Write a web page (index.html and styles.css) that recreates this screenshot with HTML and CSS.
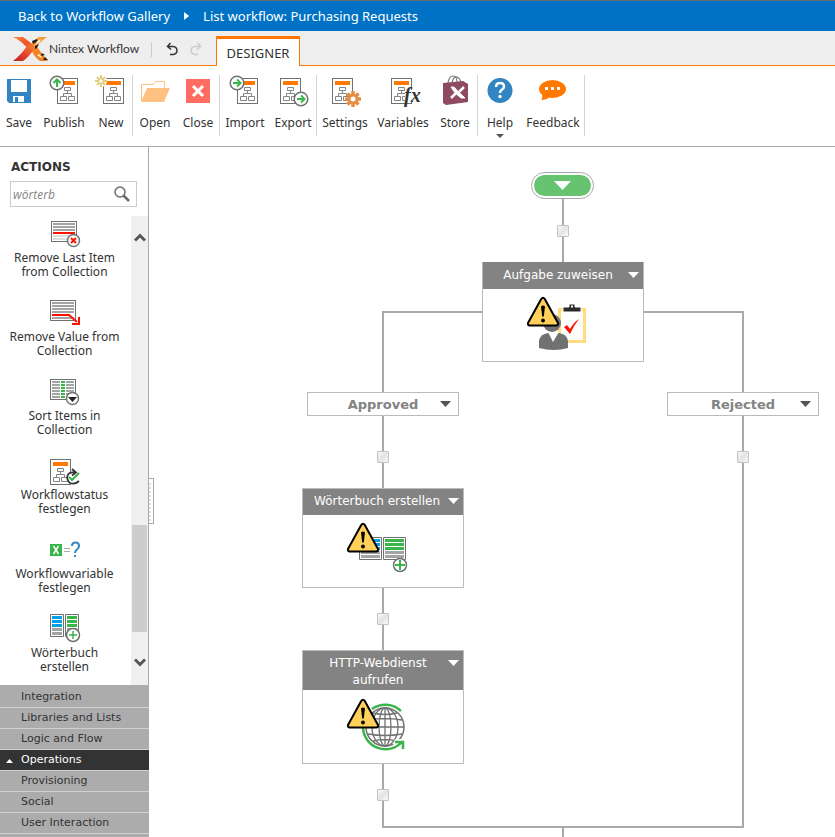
FILE: index.html
```html
<!DOCTYPE html>
<html lang="en">
<head>
<meta charset="utf-8">
<title>List workflow: Purchasing Requests</title>
<link rel="stylesheet" href="styles.css">
</head>
<body>
<svg class="defs" aria-hidden="true">
  <defs>
    <linearGradient id="logo-fill" x1="0" y1="0" x2="1" y2="1">
      <stop offset="0" stop-color="#f58a3a"/><stop offset=".5" stop-color="#ef5326"/><stop offset="1" stop-color="#f8952c"/>
    </linearGradient>
    <linearGradient id="logo-red" x1="0" y1="1" x2="1" y2="0">
      <stop offset="0" stop-color="#b3201f"/><stop offset=".5" stop-color="#e8432a"/><stop offset="1" stop-color="#f47b2c"/>
    </linearGradient>
    <g id="doc">
      <rect x="0.5" y="0.5" width="20" height="25" fill="#fff" stroke="#6f7271"/>
      <rect x="3" y="3" width="15" height="4" fill="#ff7900"/>
      <path d="M7.500 9.500h6v3h-6zM3.500 18.500h6v4h-6zM11.500 18.500h6v4h-6zM10.500 12.500v3M6.500 18.500v-3h8v3" fill="none" stroke="#858786"/>
    </g>
    <g id="warning">
      <path d="M18.200 6q1.800-2.500 3.600 0L35 30q.5 2-1.500 2.500H6.500Q4.500 32 5 30z" fill="#ffd05a" stroke="#000" stroke-width="2" stroke-linejoin="round"/>
      <path d="M18 13.500q2-2 4 0l-1.200 10h-1.600z"/><circle cx="20" cy="27.500" r="1.900"/>
    </g>
    <g id="plus">
      <circle r="6.500" fill="#fff" stroke="#6f7271" stroke-width="1.500"/>
      <path d="M-4 0h8M0-4v8" stroke="#39b54a" stroke-width="1.500"/>
    </g>
    <g id="arrow">
      <circle r="6.800" fill="#fff" stroke="#6f7271" stroke-width="1.500"/>
      <path d="M-4 0h7M0-3.500l3.500 3.500L0 3.500" fill="none" stroke="#39b54a" stroke-width="2"/>
    </g>
  </defs>
</svg>

<header class="crumbs">
  <a href="#">Back to Workflow Gallery</a>
  <span class="crumb-arrow"></span>
  <a href="#">List workflow: Purchasing Requests</a>
</header>

<div class="appbar">
  <svg class="logo" viewBox="0 0 36 26" aria-hidden="true">
    <path d="M34 1h-8q-4 2-8 7l3 6q4-6 9-10z" fill="#f79a3a"/>
    <path d="M18 13l5-3 12 15h-8q-6-4-9-12z" fill="#f58220"/>
    <path d="M0 1h10q6 4 13 11l-5 4Q8 4 0 1z" fill="url(#logo-fill)"/>
    <path d="M0 25Q8 19 14 10l7 3q-5 8-11 12z" fill="url(#logo-red)"/>
    <path d="M19 5l5-2 1 2-5 3zM22 10l4-2-2 4-2 1zM28 20l4-1-3-2zM30 24h5l-3-3z" fill="#231f20"/>
    <path d="M24 5l4-2-1 3-4 3zM26 18l3 3-1 1-4-3z" fill="#fff0c8"/>
  </svg>
  <span class="brand">Nintex Workflow</span>
  <span class="bar-sep"></span>
  <button class="undo" aria-label="Undo"><svg viewBox="0 0 12 14"><path d="M4.500 1L1.500 4.500l3.500 3M2 4.500h5q4 .5 4 4t-4 4H4" fill="none" stroke="#333" stroke-width="1.500"/></svg></button>
  <button class="undo" aria-label="Redo"><svg viewBox="0 0 12 14"><path d="M7.500 1l3 3.500-3.500 3M10 4.500H5q-4 .5-4 4t4 4h3" fill="none" stroke="#ccc" stroke-width="1.500"/></svg></button>
  <button class="tab">DESIGNER</button>
</div>

<div class="ribbon">
  <div class="group g-file">
    <button class="tool"><svg viewBox="0 0 32 32"><path d="M4 4h24v24H6l-2-2z" fill="#3284c2"/><path d="M8 5h16v12H8zM10 21h11v6H10z" fill="#fff"/><path d="M12 22h3v5h-3z" fill="#3284c2"/></svg>Save</button>
    <button class="tool"><svg viewBox="0 0 32 32"><use href="#doc" x="9" y="3"/><use href="#arrow" transform="translate(9 8) rotate(-90)"/></svg>Publish</button>
    <button class="tool"><svg viewBox="0 0 32 32"><use href="#doc" x="8" y="3"/><circle cx="6" cy="6" r="6" fill="#fff"/><path d="M6 0v3M6 9v3M0 6h3M9 6h3M2 2l2 2M8 8l2 2M10 2L8 4M4 8l-2 2" stroke="#e3cc7b" stroke-width="2"/><circle cx="6" cy="6" r="2.500" fill="#fff" stroke="#e3cc7b" stroke-width="1.500"/></svg>New</button>
  </div>
  <div class="group g-open">
    <button class="tool"><svg viewBox="0 0 32 32"><path d="M2.500 26V9.500h12l2-3h9v7" fill="none" stroke="#ffc182"/><path d="M8 13h23l-6 14H2z" fill="#ffc182"/></svg>Open</button>
    <button class="tool"><svg viewBox="0 0 32 32"><path d="M4 4h24v24H4z" fill="#ff6c61"/><path d="M11 11l10 10M21 11L11 21" stroke="#fff" stroke-width="3"/></svg>Close</button>
  </div>
  <div class="group g-port">
    <button class="tool"><svg viewBox="0 0 32 32"><use href="#doc" x="8" y="3"/><use href="#arrow" x="8" y="8"/></svg>Import</button>
    <button class="tool"><svg viewBox="0 0 32 32"><use href="#doc" x="3" y="3"/><use href="#arrow" x="24" y="24"/></svg>Export</button>
  </div>
  <div class="group g-config">
    <button class="tool"><svg viewBox="0 0 32 32"><use href="#doc" x="3" y="3"/><circle cx="24" cy="24" r="5.500" fill="#e58e43"/><path d="M24 16v16M16 24h16M18.500 18.500l11 11M29.500 18.500l-11 11" stroke="#e58e43" stroke-width="3.500"/><circle cx="24" cy="24" r="2.500" fill="#fff"/></svg>Settings</button>
    <button class="tool"><svg viewBox="0 0 32 32"><use href="#doc" x="4" y="3"/><path d="M18 15h8v12h-8z" fill="#fff"/><text x="17" y="27" class="fx">fx</text></svg>Variables</button>
    <button class="tool"><svg viewBox="0 0 32 32"><path d="M9 8q1-7 5-7t4 6M13 7q2-6 5-5t4 6" fill="none" stroke="#777" stroke-width="1.200"/><path d="M4 8l20-2 5 3v18l-22 3-3-2z" fill="#8d4a61"/><path d="M12 12h3q4 5 11 11h-4q-7-5-10-11z" fill="#fff" stroke="#fff"/><path d="M25 12l-5 5M12 23l5-5" fill="none" stroke="#fff" stroke-width="2.500"/></svg>Store</button>
  </div>
  <div class="group g-help">
    <button class="tool tool-menu"><svg viewBox="0 0 32 32"><circle cx="16" cy="15.500" r="12.500" fill="#3284c2"/><path d="M12 12q0-4 4-4t4 3.500q0 2-2.500 3.500-1.500 1-1.500 3" fill="none" stroke="#fff" stroke-width="2.500"/><circle cx="16" cy="21.500" r="1.700" fill="#fff"/></svg>Help</button>
    <button class="tool"><svg viewBox="0 0 32 32"><ellipse cx="15.500" cy="14" rx="13.500" ry="9" fill="#ff7900"/><path d="M5 19q1 4-1 6 6 0 10-4z" fill="#ff7900"/><path d="M8 12h3v3H8zM14 12h3v3h-3zM20 12h3v3h-3z" fill="#fff"/></svg>Feedback</button>
  </div>
</div>

<main class="workspace">
  <aside class="sidebar">
    <label class="side-title" for="search">ACTIONS</label>
    <div class="search">
      <input id="search" type="text" value="wörterb">
      <svg viewBox="0 0 16 16" aria-hidden="true"><circle cx="6" cy="6" r="5" fill="none" stroke="#6b6b6b" stroke-width="1.500"/><path d="M9.500 9.500L15 15" stroke="#6b6b6b" stroke-width="2.500"/></svg>
    </div>
    <div class="list">
      <div class="actions">
        <button class="action"><svg viewBox="0 0 32 32"><rect x="2.500" y="3.500" width="25" height="20" fill="#fff" stroke="#6f7271"/><path d="M4 6h22M4 9h22M4 12h22" stroke="#a3a5a4" stroke-width="2"/><path d="M4 15h22" stroke="#f10" stroke-width="2"/><path d="M4 18h22M4 21h22" stroke="#ddd" stroke-width="2"/><circle cx="24.500" cy="22.500" r="6" fill="#fff" stroke="#6f7271" stroke-width="1.500"/><path d="M22 20l5 5M27 20l-5 5" stroke="#f10" stroke-width="2"/></svg>Remove Last Item from Collection</button>
        <button class="action"><svg viewBox="0 0 32 32"><rect x="1.500" y="3.500" width="25" height="20" fill="#fff" stroke="#6f7271"/><path d="M3 6h22M3 9h22M3 12h22M3 15h22M3 21h22" stroke="#a3a5a4" stroke-width="2"/><path d="M3 18h17l8 7M30 20v7h-7" fill="none" stroke="#f10" stroke-width="2"/></svg>Remove Value from Collection</button>
        <button class="action"><svg viewBox="0 0 32 32"><rect x="1.500" y="3.500" width="25" height="20" fill="#fff" stroke="#6f7271"/><path d="M3 6h8M17 6h8M3 9h8M17 9h8M3 12h8M17 12h8M3 15h8M17 15h8M3 18h8M17 18h8M3 21h8M17 21h8" stroke="#a3a5a4" stroke-width="2"/><path d="M12 6h4M12 9h4M12 12h4M12 15h4M12 18h4M12 21h4" stroke="#39b54a" stroke-width="2"/><circle cx="23.500" cy="22.500" r="6" fill="#fff" stroke="#6f7271" stroke-width="1.500"/><path d="M19 21h9l-4.500 5z" fill="#222"/></svg>Sort Items in Collection</button>
        <button class="action"><svg viewBox="0 0 32 32"><use href="#doc" x="1" y="4"/><circle cx="24" cy="23" r="6" fill="#fff"/><path d="M26 17.500q-6-1-7.500 3-1 5 2.500 7.500 5 2 9-2M23 14l4 3.500-4 3" fill="none" stroke="#333" stroke-width="1.800"/><path d="M20 22l3 3 7-7" fill="none" stroke="#39b54a" stroke-width="2"/></svg>Workflowstatus festlegen</button>
        <button class="action"><svg viewBox="0 0 32 32"><path d="M1 10h12v12H1z" fill="#39b54a"/><path d="M4.500 12l5 8M9.500 12l-5 8" stroke="#fff" stroke-width="1.500"/><path d="M15 14.500h6M15 17.500h6" stroke="#aaa"/><path d="M23 12q0-3.500 3.500-3.500T30 12q0 2-2 3.500T26 19" fill="none" stroke="#3284c2" stroke-width="2"/><path d="M25 21h2v2h-2z" fill="#3284c2"/></svg>Workflowvariable festlegen</button>
        <button class="action"><svg viewBox="0 0 32 32"><path d="M1.500 1.500h13v22h-13zM16.500 1.500h13v22h-13z" fill="#fff" stroke="#6f7271"/><path d="M3 4.500h10M3 8.500h10M3 12.500h10" stroke="#00a0e6" stroke-width="3"/><path d="M18 4.500h10M18 8.500h10M18 12.500h10" stroke="#39b54a" stroke-width="3"/><path d="M3 16.500h10M3 20.500h10M18 16.500h10M18 20.500h10" stroke="#a3a5a4" stroke-width="3"/><use href="#plus" x="24" y="22"/></svg>Wörterbuch erstellen</button>
      </div>
      <div class="scroll" aria-hidden="true">
        <svg class="scroll-up" viewBox="0 0 12 9"><path d="M1 7.500l5-5 5 5" fill="none" stroke="#555" stroke-width="3"/></svg>
        <span class="thumb"></span>
        <svg class="scroll-down" viewBox="0 0 12 9"><path d="M1 1.500l5 5 5-5" fill="none" stroke="#555" stroke-width="3"/></svg>
      </div>
    </div>
    <nav class="categories">
      <a href="#">Integration</a>
      <a href="#">Libraries and Lists</a>
      <a href="#">Logic and Flow</a>
      <a href="#" class="current">Operations</a>
      <a href="#">Provisioning</a>
      <a href="#">Social</a>
      <a href="#">User Interaction</a>
    </nav>
    <span class="grip"></span>
  </aside>

  <section class="canvas">
    <svg class="wires" viewBox="149 147 686 690" aria-hidden="true">
      <path d="M563 198v64M482 312H383v515h360V312H643M563 827v10" fill="none" stroke="#a9a9a9" stroke-width="2"/>
    </svg>
    <button class="start" aria-label="Start"></button>
    <button class="joint j1" aria-label="Insert action"></button>
    <button class="joint j2" aria-label="Insert action"></button>
    <button class="joint j3" aria-label="Insert action"></button>
    <button class="joint j4" aria-label="Insert action"></button>
    <button class="joint j5" aria-label="Insert action"></button>

    <article class="node n-task">
      <button class="node-head">Aufgabe zuweisen</button>
      <svg class="node-icon" viewBox="0 0 80 60">
        <path d="M36.500 16.500h25v32h-25z" fill="#fff" stroke="#ffdc7d" stroke-width="3"/>
        <path d="M40 19v-5h6v-3h6v3h6v5z" fill="#2b2b2b" stroke="#fff"/><path d="M48 12.500h2v2h-2z" fill="#fff"/>
        <path d="M41 34l3-2 3 4q4-7 9-10-5 6-9 15z" fill="#f10"/>
        <circle cx="29" cy="30" r="9" fill="#6f7271"/>
        <path d="M16 55V48q1-7 9-8h11q8 1 9 8v7q-14 4-29 0z" fill="#6f7271"/><path d="M25 39h11l-6 10z" fill="#fff"/>
        <use href="#warning"/>
      </svg>
    </article>
    <button class="branch b-yes">Approved</button>
    <button class="branch b-no">Rejected</button>
    <article class="node n-dict">
      <button class="node-head">Wörterbuch erstellen</button>
      <svg class="node-icon" viewBox="0 0 80 60">
        <path d="M16.500 18.500h22v22h-22zM40.500 18.500h22v22h-22z" fill="#fff" stroke="#6f7271"/>
        <path d="M18 21.500h19M18 25.500h19M18 29.500h19" stroke="#00a0e6" stroke-width="3"/>
        <path d="M42 21.500h19M42 25.500h19M42 29.500h19" stroke="#39b54a" stroke-width="3"/>
        <path d="M18 33.500h19M18 37.500h19M42 33.500h19M42 37.500h19" stroke="#a3a5a4" stroke-width="3"/>
        <use href="#plus" x="57" y="46"/><path d="M52 46h10M57 41v10" stroke="#39b54a" stroke-width="2"/>
        <use href="#warning"/>
      </svg>
    </article>
    <article class="node n-http">
      <button class="node-head">HTTP-Webdienst aufrufen</button>
      <svg class="node-icon" viewBox="0 0 80 60">
        <g fill="none" stroke="#6f7271" stroke-width="1.300">
          <circle cx="42" cy="32" r="19" stroke-width="1.500"/>
          <ellipse cx="42" cy="32" rx="6" ry="19"/>
          <ellipse cx="42" cy="32" rx="13" ry="19"/>
          <path d="M42 13v38M23 32h38M25 25q17-3 34 0M25 39q17 3 34 0M30 18q12 3 24 0M30 46q12-3 24 0"/>
        </g>
        <path d="M50 49l2-5h9v7l-8 3z" fill="#fff"/>
        <path d="M29 14A22.500 22.500 0 0 1 58 16M20 33A22.500 22.500 0 0 0 59 47M52 47h8v7" fill="none" stroke="#39b54a" stroke-width="2.500"/>
        <use href="#warning"/>
      </svg>
    </article>
  </section>
</main>
</body>
</html>
```
FILE: styles.css
```css
* { box-sizing: border-box; }
body {
  margin: 0;
  height: 100vh;
  display: flex;
  flex-direction: column;
  overflow: hidden;
  background: #fff;
  color: #333;
  font: 12px/14px "Noto Sans", sans-serif;
}
button {
  margin: 0;
  padding: 0;
  border: 0;
  background: none;
  color: inherit;
  font: inherit;
}
a { color: inherit; text-decoration: none; }
svg { display: block; flex: none; }
.defs { position: absolute; width: 0; height: 0; }

.crumbs {
  display: flex;
  flex: none;
  align-items: center;
  gap: 14px;
  height: 31px;
  padding-left: 18px;
  border-top: 1px solid #6b6b6b;
  background: #0072c6;
  color: #fff;
  font-size: 13px;
}
.crumb-arrow {
  width: 5px;
  height: 8px;
  background: #fff;
  clip-path: polygon(0 0, 100% 50%, 0 100%);
}

.appbar {
  display: flex;
  flex: none;
  align-items: center;
  height: 35px;
  padding: 2px 0 0 13px;
  border-bottom: 1px solid #ff7900;
  background: #eee;
}
.logo { width: 36px; height: 26px; }
.brand { width: 102px; font: 12px/16px Lato, sans-serif; }
.bar-sep { width: 1px; height: 15px; margin-right: 14px; background: #ccc; }
.undo { width: 24px; }
.undo svg { width: 12px; height: 14px; }
.tab {
  align-self: flex-end;
  width: 84px;
  height: 30px;
  margin: 0 0 -1px 2px;
  border: solid #ff7900;
  border-width: 3px 1px 0;
  background: #fff;
  font-size: 13px;
}

.ribbon {
  display: flex;
  flex: none;
  height: 81px;
  padding-top: 9px;
  border-bottom: 1px solid #aaa;
}
.group {
  display: grid;
  height: 61px;
  border-right: 1px solid #d4d4d4;
}
.g-file { grid-template-columns: 38px 52px 42px; }
.g-open { grid-template-columns: 44px 42px; }
.g-port { grid-template-columns: 50px 46px; }
.g-config { grid-template-columns: 56px 60px 44px; }
.g-help { grid-template-columns: 44px 62px; }
.tool {
  display: flex;
  flex-direction: column;
  align-items: center;
  gap: 9px;
  white-space: nowrap;
}
.tool svg { width: 32px; height: 32px; overflow: visible; }
.tool-menu::after {
  content: "";
  width: 8px;
  height: 4px;
  margin-top: -5px;
  background: #555;
  clip-path: polygon(0 0, 100% 0, 50% 100%);
}
.fx { font: italic bold 20px "Liberation Serif", serif; fill: #333; }

.workspace { display: flex; flex: 1; min-height: 0; }
.sidebar {
  position: relative;
  display: flex;
  flex-direction: column;
  width: 149px;
  border-right: 1px solid #a9a9a9;
}
.side-title { padding: 13px 11px 7px; font: bold 12px/14px "DejaVu Sans", sans-serif; }
.search {
  display: flex;
  align-items: center;
  width: 127px;
  height: 26px;
  margin: 0 0 9px 10px;
  padding-right: 6px;
  border: 1px solid #ccc;
}
.search input {
  flex: 1;
  min-width: 0;
  padding: 0 2px;
  border: 0;
  background: none;
  color: #8a8a8a;
  font: italic 12px "Noto Sans", sans-serif;
}
.search svg { width: 16px; height: 16px; }
.list { display: flex; flex: 1; min-height: 0; overflow: hidden; }
.actions { flex: 1; padding-top: 2px; }
.action {
  display: flex;
  flex-direction: column;
  align-items: center;
  gap: 1px;
  width: 100%;
  height: 79px;
  padding: 0 9px 0 7px;
}
.action svg { width: 32px; height: 32px; }
.scroll {
  display: flex;
  flex-direction: column;
  align-items: center;
  width: 17px;
  padding: 17px 0 18px;
  background: #f0f0f0;
}
.scroll svg { width: 12px; height: 9px; }
.thumb { width: 15px; height: 107px; margin: auto 0 26px; background: #cdcdcd; }
.categories {
  margin-right: -1px;
  padding: 2px 0 3px;
  background: #acacac;
  font: 11px/19px "DejaVu Sans", sans-serif;
}
.categories a {
  display: block;
  height: 21px;
  padding-left: 21px;
  border-bottom: 1px solid #d0d0d0;
}
.categories .current { position: relative; background: #333; color: #fff; }
.current::before {
  content: "";
  position: absolute;
  left: 6px;
  top: 9px;
  width: 7px;
  height: 4px;
  background: #fff;
  clip-path: polygon(50% 0, 100% 100%, 0 100%);
}
.grip {
  position: absolute;
  z-index: 1;
  left: 148px;
  top: 331px;
  width: 6px;
  height: 46px;
  border: 1px solid #a9a9a9;
  border-left: 0;
  background: repeating-linear-gradient(#fff 0 2px, #ddd 2px 4px) content-box #fff;
  padding: 2px 2px 2px 1px;
}

.canvas { position: relative; flex: 1; overflow: hidden; }
.wires { width: 686px; height: 690px; }
.start, .joint, .node, .branch { position: absolute; }
.start {
  left: 382px;
  top: 25px;
  width: 63px;
  height: 27px;
  padding: 2px;
  border: 1px solid #a9a9a9;
  border-radius: 14px;
  background: #fff;
}
.start::before {
  content: "";
  display: block;
  height: 21px;
  border-radius: 11px;
  background: #66c36f;
}
.start::after {
  content: "";
  position: absolute;
  left: 22px;
  top: 8px;
  width: 17px;
  height: 9px;
  background: #fff;
  clip-path: polygon(0 0, 100% 0, 50% 100%);
}
.joint {
  width: 12px;
  height: 12px;
  border: 1px solid #c4c4c4;
  border-radius: 1px;
  background: linear-gradient(135deg, #f8f8f8, #e4e4e4 50%, #f8f8f8);
}
.j1 { left: 408px; top: 78px; }
.j2 { left: 228px; top: 304px; }
.j3 { left: 588px; top: 304px; }
.j4 { left: 228px; top: 466px; }
.j5 { left: 228px; top: 642px; }
.node {
  width: 162px;
  border: 1px solid #bbb;
  background: #fff;
}
.n-task { left: 333px; top: 115px; border-top-color: #838383; }
.n-dict { left: 153px; top: 341px; }
.n-http { left: 153px; top: 503px; }
.node-head {
  position: relative;
  display: block;
  width: 100%;
  padding: 4px 24px 5px 14px;
  background: #838383;
  color: #fff;
  font: 12px/17px "DejaVu Sans", sans-serif;
}
.n-dict .node-head { padding: 4px 20px 5px 8px; white-space: nowrap; }
.n-http .node-head { padding-bottom: 1px; }
.node-head::after, .branch::after {
  content: "";
  position: absolute;
  right: 4px;
  top: 9px;
  width: 11px;
  height: 6px;
  background: #fff;
  clip-path: polygon(0 0, 100% 0, 50% 100%);
}
.node-icon { width: 80px; height: 60px; margin: 4px auto 8px; }
.n-http .node-icon { margin-top: 5px; }
.branch {
  top: 245px;
  width: 152px;
  height: 24px;
  border: 1px solid #bbb;
  background: #fff;
  color: #838383;
  font: bold 13px/17px "DejaVu Sans", sans-serif;
}
.branch::after { right: 7px; top: 8px; background: #555; }
.b-yes { left: 158px; }
.b-no { left: 518px; }
```
